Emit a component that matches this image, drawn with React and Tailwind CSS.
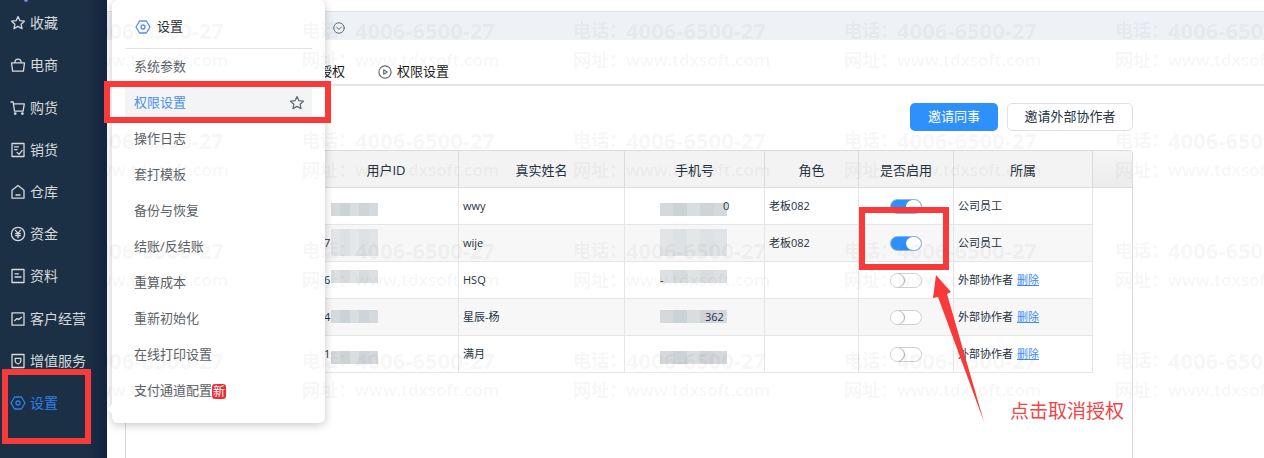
import clsx from 'clsx';

const svgProps = {
  viewBox: '0 0 16 16',
  fill: 'none',
  stroke: 'currentColor',
  strokeWidth: 1.3,
  strokeLinejoin: 'round',
  strokeLinecap: 'round',
  'aria-hidden': true,
};

const iconPaths = {
  star: <path d="M8 1.6l1.9 4.1 4.5.5-3.3 3 .9 4.4L8 11.4l-4 2.2.9-4.4-3.3-3 4.5-.5z" />,
  bag: <path d="M1.5 5.8h13l-1.1 8.4H2.6zM4.8 5.8c.2-5 6.2-5 6.4 0" />,
  cart: (
    <>
      <path d="M1 2h2.2l1.3 9.2h8.6l1.2-7.4H3.5" />
      <circle cx="5.2" cy="13.6" r=".8" />
      <circle cx="12.4" cy="13.6" r=".8" />
    </>
  ),
  sale: <path d="M2 1.5h12v13H2zM4.5 4.8h4M4.5 7.6h2.6M7 10.4l2 2 3.2-4" />,
  house: <path d="M2 6.2L8 1.4l6 4.8v8H2zM6 11h4" />,
  money: (
    <>
      <circle cx="8" cy="8" r="6.6" />
      <path d="M5.5 4.4L8 7.4l2.5-3M8 7.4v4.4M5.6 7.6h4.8M5.6 9.6h4.8" />
    </>
  ),
  doc: <path d="M2 1.5h12v13H2zM5 5.8h3.4M5 9h6" />,
  chart: <path d="M2 1.8h12v12.4H2zM4.8 9.6l2.2-2 1.8 1 2.6-2.4" />,
  shield: <path d="M2 1.5h12v13H2zM5.2 5.4h5.6v2.8c0 1.4-1.4 2.2-2.8 2.8-1.4-.6-2.8-1.4-2.8-2.8z" />,
  gear: (
    <>
      <path d="M4.6 2h6.8L15 8l-3.600 6H4.600L1 8z" />
      <circle cx="8" cy="8" r="2" />
    </>
  ),
};

const navItems = [
  { label: '收藏', icon: 'star' },
  { label: '电商', icon: 'bag' },
  { label: '购货', icon: 'cart' },
  { label: '销货', icon: 'sale' },
  { label: '仓库', icon: 'house' },
  { label: '资金', icon: 'money' },
  { label: '资料', icon: 'doc' },
  { label: '客户经营', icon: 'chart' },
  { label: '增值服务', icon: 'shield' },
  { label: '设置', icon: 'gear', active: true },
];

const menuItems = [
  { label: '系统参数' },
  { label: '权限设置', active: true },
  { label: '操作日志' },
  { label: '套打模板' },
  { label: '备份与恢复' },
  { label: '结账/反结账' },
  { label: '重算成本' },
  { label: '重新初始化' },
  { label: '在线打印设置' },
  { label: '支付通道配置', isNew: true },
];

const users = [
  { id: '', name: 'wwy', phone: '0', phoneClass: 'pl-[98px]', role: '老板082', enabled: true, owner: '公司员工', mask: 'top-[15px] h-[13px]', tone: 'opacity-100' },
  { id: '7', name: 'wije', phone: '', role: '老板082', enabled: true, owner: '公司员工', mask: 'top-[4px] h-[27px]', tone: 'opacity-60' },
  { id: '6', name: 'HSQ', phone: '-', phoneClass: 'pl-[35px]', role: '', enabled: false, owner: '外部协作者', external: true, mask: 'top-[8px] h-[13px]', tone: 'opacity-80' },
  { id: '4', name: '星辰-杨', phone: '362', phoneClass: 'pl-[80px]', role: '', enabled: false, owner: '外部协作者', external: true, mask: 'top-[11px] h-[13px]', tone: 'opacity-100' },
  { id: '1', name: '满月', phone: '', role: '', enabled: false, owner: '外部协作者', external: true, mask: 'top-[15px] h-[13px]', tone: 'opacity-100' },
];

const headers = ['', '用户ID', '真实姓名', '手机号', '角色', '是否启用', '所属'];

function Icon({ name, className }) {
  return (
    <svg {...svgProps} className={className}>
      {iconPaths[name]}
    </svg>
  );
}

function Sidebar() {
  return (
    <nav className="relative z-30 flex w-[107px] shrink-0 flex-col bg-linear-to-r from-[#1c3045] from-80% to-[#12233f] pt-[2px] pb-[34px]">
      {/* tail of the brand mark above the list */}
      <span className="absolute top-0 left-[24px] h-[2px] w-[4px] rounded-b-full bg-[#8a7bea]" />
      {navItems.map((item) => (
        <a
          key={item.label}
          href="#"
          className={clsx(
            'flex min-h-[42px] flex-1 items-center gap-1 pl-[10px] text-sm',
            item.active ? 'text-[#2f80ea]' : 'text-[#d5dade]'
          )}
        >
          <Icon name={item.icon} className="size-4" />
          <span>{item.label}</span>
        </a>
      ))}
    </nav>
  );
}

function SettingsMenu() {
  return (
    <div className="absolute top-0 left-[112px] z-10 w-[213px] rounded-md bg-white px-[13px] pt-[5px] pb-[14px] shadow-[0_2px_10px_rgba(0,0,0,0.22)]">
      <span className="absolute bottom-[10px] -left-[3px] size-2 rotate-45 bg-white" />
      <div className="flex h-11 items-center gap-[6px] border-b border-[#e2e2e2] pl-[10px] text-[13px] text-[#1f2d3a]">
        <Icon name="gear" className="size-4 text-[#5b8ff0]" />
        <span>设置</span>
      </div>
      <ul>
        {menuItems.map((item) => (
          <li key={item.label} className={clsx('flex h-9 items-center pr-[7px] pl-[9px]', item.active && 'bg-[#f3f4f5]')}>
            <a href="#" className={clsx('text-[13px]', item.active ? 'text-[#4a90f0]' : 'text-[#5c6268]')}>
              {item.label}
            </a>
            {item.isNew && (
              <span className="rounded-[3px] bg-[#ee2b34] px-[1px] text-[12px] leading-[15px] text-white">新</span>
            )}
            {item.active && (
              <button type="button" aria-label="收藏" className="ml-auto text-[#686d72]">
                <Icon name="star" className="size-4" />
              </button>
            )}
          </li>
        ))}
      </ul>
    </div>
  );
}

function Mask({ className }) {
  return (
    <div className={clsx('absolute flex', className)}>
      <span className="flex-1 bg-[#d5d9dc]" />
      <span className="flex-1 bg-[#ccd3d7]" />
      <span className="flex-1 bg-[#d8dddd]" />
      <span className="flex-1 bg-[#d0d4d8]" />
      <span className="flex-1 bg-[#d4d9dd]" />
    </div>
  );
}

function Switch({ checked, label }) {
  return (
    <input
      type="checkbox"
      role="switch"
      aria-label={label}
      defaultChecked={checked}
      className="block h-[15px] w-8 appearance-none rounded-full border border-[#cfcfcf] bg-white before:block before:size-[13px] before:rounded-full before:bg-white before:shadow-[1px_0_1px_rgba(0,0,0,0.35)] checked:border-[#8fb4e6] checked:bg-[#2e90fa] checked:before:ml-auto checked:before:w-[15px] checked:before:shadow-none"
    />
  );
}

function UserTable() {
  return (
    <table className="w-full table-fixed border-separate border-spacing-0 rounded-t border-t border-[#dcdcdc] text-[11px] text-[#24323f]">
      <colgroup>
        <col className="w-[188px]" />
        <col className="w-[145px]" />
        <col className="w-[166px]" />
        <col className="w-[140px]" />
        <col className="w-[94px]" />
        <col className="w-[95px]" />
        <col className="w-[139px]" />
        <col />
      </colgroup>
      <thead>
        <tr className="h-[37px] text-[13px]">
          {headers.map((title, idx) => (
            <th key={idx} className="border-r border-b border-[#dcdcdc] bg-[#f3f3f3] px-0 pt-[3px] pb-0 font-normal">
              {title}
            </th>
          ))}
          <th className="rounded-tr border-b border-[#dcdcdc] bg-linear-to-b from-[#f5f5f5] to-[#ececec] p-0" />
        </tr>
      </thead>
      <tbody className="[&_td]:h-[37px] [&_td]:border-b [&_td]:border-[#e6e6e6] [&_td]:p-0 [&_td:last-child]:border-0">
        {users.map((user, idx) => (
          <tr key={user.name}>
            <td className={idx % 2 ? 'bg-[#f7f7f7]' : ''} />
            <td className={clsx('relative border-r', idx % 2 && 'bg-[#f7f7f7]')}>
              <span className="pl-[10px]">{user.id}</span>
              <Mask className={clsx('left-[17px] w-[47px]', user.mask, user.tone)} />
            </td>
            <td className={clsx('border-r', idx % 2 && 'bg-[#f7f7f7]')}>
              <span className="pl-1">{user.name}</span>
            </td>
            <td className={clsx('relative border-r', idx % 2 && 'bg-[#f7f7f7]')}>
              <Mask className={clsx('left-[35px] w-[67px]', user.mask, user.tone)} />
              <span className={clsx('relative', user.phoneClass)}>{user.phone}</span>
            </td>
            <td className={clsx('border-r', idx % 2 && 'bg-[#f7f7f7]')}>
              <span className="pl-1">{user.role}</span>
            </td>
            <td className={clsx('border-r', idx % 2 && 'bg-[#f7f7f7]')}>
              <div className="flex justify-center">
                <Switch checked={user.enabled} label={`是否启用 ${user.name}`} />
              </div>
            </td>
            <td className={clsx('border-r', idx % 2 && 'bg-[#f7f7f7]')}>
              <div className="flex gap-1 pl-1">
                <span>{user.owner}</span>
                {user.external && (
                  <a href="#" className="text-[#3f8cf5] underline">
                    删除
                  </a>
                )}
              </div>
            </td>
            <td />
          </tr>
        ))}
      </tbody>
    </table>
  );
}

function Watermark() {
  return (
    <div
      aria-hidden="true"
      className="pointer-events-none absolute inset-0 z-20 grid grid-cols-[repeat(5,271px)] content-start gap-y-[50px] overflow-hidden pt-[15px] pl-[31px] text-black/5"
    >
      {Array.from({ length: 20 }, (_, i) => (
        <div key={i} className="whitespace-nowrap">
          <div className="flex h-[30px] items-center font-bold">
            <span className="w-[53px] text-lg">电话：</span>
            <span className="text-[22px]">4006-6500-27</span>
          </div>
          <div className="flex h-[30px] items-center font-semibold">
            <span className="w-[53px] text-lg">网址：</span>
            <span className="text-[17px]">www.tdxsoft.com</span>
          </div>
        </div>
      ))}
    </div>
  );
}

function Annotations() {
  return (
    <div className="pointer-events-none absolute inset-0 z-40 overflow-hidden">
      <div className="absolute top-[81px] left-[104px] h-[42px] w-[227px] border-6 border-[#f93a3a]" />
      <div className="absolute top-[369px] left-[2px] h-[75px] w-[89px] border-6 border-[#f93a3a]" />
      <div className="absolute top-[207px] left-[859px] h-[63px] w-[90px] border-6 border-[#f93a3a]" />
      <svg className="absolute top-[274px] left-[930px] h-[150px] w-[60px]" viewBox="930 274 60 150" fill="#f93a3a" aria-hidden="true">
        <path d="M936 275l15 17-4 2 37 128-46-125-5 1z" />
      </svg>
      <p className="absolute top-[397px] left-[1010px] text-[19px] leading-[28px] whitespace-nowrap text-[#f04545]">点击取消授权</p>
    </div>
  );
}

function App() {
  return (
    <div className="relative flex min-h-screen overflow-hidden bg-white font-['Open_Sans','Noto_Sans_CJK_SC',sans-serif]">
      <Sidebar />
      <SettingsMenu />

      <main className="flex min-w-0 flex-1 flex-col pt-[11px]">
        <div className="flex h-[29px] items-center border-t border-[#e0e3e6] bg-[#eef2f6] pt-[3px] pl-[226px]">
          <button type="button" aria-label="展开" className="text-[#5f6770]">
            <svg {...svgProps} className="size-3">
              <circle cx="8" cy="8" r="7" />
              <path d="M5 7l3 2.800L11 7" />
            </svg>
          </button>
        </div>

        <div className="flex h-[46px] items-center gap-[33px] border-b-2 border-[#e5e5e5] pt-5 pl-[212px] text-[13px] text-[#1a1a1a]">
          <a href="#">授权</a>
          <a href="#" className="flex items-center gap-[5px]">
            <svg {...svgProps} className="size-[14px] text-[#666c72]">
              <circle cx="8" cy="8" r="7" />
              <path d="M6.500 5.500v5L10.500 8z" />
            </svg>
            权限设置
          </a>
        </div>

        <section className="mr-[131px] ml-[18px] flex flex-1 flex-col border-l border-[#d8d8d8]">
          <div className="flex justify-end gap-[9px] pt-[17px] pb-[19px] text-[13px]">
            <button type="button" className="h-7 w-[88px] rounded-[5px] bg-[#2e90fa] text-white">
              邀请同事
            </button>
            <button type="button" className="h-7 w-[126px] rounded-[5px] border border-[#dfe1e5] bg-white text-[#24323f]">
              邀请外部协作者
            </button>
          </div>
          <div className="flex-1 rounded-t border-r border-[#dcdcdc]">
            <UserTable />
          </div>
        </section>
      </main>

      <Watermark />
      <Annotations />
    </div>
  );
}

export default App;
